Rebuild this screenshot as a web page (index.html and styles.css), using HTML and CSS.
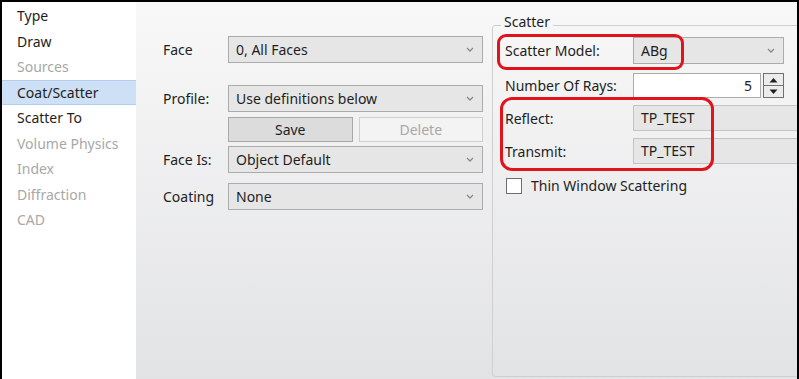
FILE: index.html
```html
<!DOCTYPE html>
<html lang="en">
<head>
    <meta charset="UTF-8">
    <title>Coat/Scatter</title>
    <link rel="stylesheet" href="styles.css">
</head>
<body>
    <div class="window">
        <ul class="nav">
            <li>Type</li>
            <li>Draw</li>
            <li class="disabled">Sources</li>
            <li class="active">Coat/Scatter</li>
            <li>Scatter To</li>
            <li class="disabled">Volume Physics</li>
            <li class="disabled">Index</li>
            <li class="disabled">Diffraction</li>
            <li class="disabled">CAD</li>
        </ul>

        <div class="content">
            <div class="face-form">
                <div class="row row-face">
                    <label>Face</label>
                    <div class="combo"><span>0, All Faces</span><svg class="chev" width="8" height="5" viewBox="0 0 8 5"><polyline points="1,1 4,4 7,1" /></svg></div>
                </div>
                <div class="row row-profile">
                    <label>Profile:</label>
                    <div class="combo"><span>Use definitions below</span><svg class="chev" width="8" height="5" viewBox="0 0 8 5"><polyline points="1,1 4,4 7,1" /></svg></div>
                </div>
                <div class="row row-buttons">
                    <label></label>
                    <div class="buttons">
                        <button class="btn">Save</button>
                        <button class="btn btn-disabled">Delete</button>
                    </div>
                </div>
                <div class="row row-faceis">
                    <label>Face Is:</label>
                    <div class="combo"><span>Object Default</span><svg class="chev" width="8" height="5" viewBox="0 0 8 5"><polyline points="1,1 4,4 7,1" /></svg></div>
                </div>
                <div class="row row-coating">
                    <label>Coating</label>
                    <div class="combo"><span>None</span><svg class="chev" width="8" height="5" viewBox="0 0 8 5"><polyline points="1,1 4,4 7,1" /></svg></div>
                </div>
            </div>

            <fieldset class="group">
                <legend>Scatter</legend>
                <div class="grow grow-model">
                    <label>Scatter Model:</label>
                    <div class="combo combo-short"><span>ABg</span><svg class="chev" width="8" height="5" viewBox="0 0 8 5"><polyline points="1,1 4,4 7,1" /></svg></div>
                </div>
                <div class="grow grow-rays">
                    <label>Number Of Rays:</label>
                    <div class="spin">
                        <div class="spin-input">5</div>
                        <div class="spin-buttons">
                            <div class="spin-btn"><svg width="9" height="6" viewBox="0 0 9 6"><polygon points="0.5,5.5 4.5,1 8.5,5.5" /></svg></div>
                            <div class="spin-btn"><svg width="9" height="6" viewBox="0 0 9 6"><polygon points="0.5,0.5 4.5,5 8.5,0.5" /></svg></div>
                        </div>
                    </div>
                </div>
                <div class="grow grow-reflect">
                    <label>Reflect:</label>
                    <div class="field">TP_TEST</div>
                </div>
                <div class="grow grow-transmit">
                    <label>Transmit:</label>
                    <div class="field">TP_TEST</div>
                </div>
                <div class="check-row">
                    <span class="check"></span>
                    <span>Thin Window Scattering</span>
                </div>
            </fieldset>
        </div>

        <!-- red callouts drawn over the screenshot -->
        <div class="callout callout-model"></div>
        <div class="callout callout-coat"></div>
    </div>
</body>
</html>
```

FILE: styles.css
```css
body {
    margin: 0;
    padding: 0;
    font-family: "Noto Sans", "Open Sans", sans-serif;
    font-size: 14px;
    color: #1e1e1e;
    background: #fff;
}

.window {
    position: relative;
    width: 799px;
    height: 379px;
    box-sizing: border-box;
    border: 2px solid #000;
    border-bottom: none;
    display: flex;
    overflow: hidden;
}

.nav {
    list-style: none;
    margin: 0;
    padding: 1px 0 0 0;
    width: 134px;
    flex-shrink: 0;
    background: #fff;
}

    .nav li {
        height: 25.5px;
        line-height: 25.5px;
        padding-left: 15px;
        box-sizing: border-box;
        white-space: nowrap;
    }

    .nav .disabled {
        color: #a8a8a8;
    }

    .nav .active {
        background: #cde0f6;
        border-top: 1px solid #b2cdef;
        border-bottom: 1px solid #b2cdef;
        line-height: 23.5px;
    }

.content {
    flex: 1;
    display: flex;
    align-items: flex-start;
    background: linear-gradient(#f8f8f8, #e2e3e5);
    padding: 0 0 0 27px;
}

.face-form {
    width: 320px;
    padding-top: 34px;
}

.row {
    display: flex;
    align-items: center;
}

    .row label {
        width: 65px;
        flex-shrink: 0;
    }

.row-profile { margin-top: 22px; }
.row-buttons { margin-top: 5px; }
.row-faceis { margin-top: 4px; }
.row-coating { margin-top: 10px; }

.combo {
    display: flex;
    align-items: center;
    justify-content: space-between;
    width: 255px;
    height: 27px;
    box-sizing: border-box;
    padding: 0 8px 0 7px;
    background: #e6e6e6;
    border: 1px solid #acacac;
}

.chev polyline {
    fill: none;
    stroke: #8a8a8a;
    stroke-width: 1.3;
}

.buttons {
    display: flex;
    gap: 6px;
    width: 255px;
}

.btn {
    flex: 1;
    height: 25px;
    font-family: inherit;
    font-size: 14px;
    color: #1e1e1e;
    background: #dcdcdc;
    border: 1px solid #a8a8a8;
    padding: 0;
}

.btn-disabled {
    background: #f3f3f3;
    border-color: #cfcfcf;
    color: #a8a8a8;
}

.group {
    margin: 13px 0 0 9px;
    padding: 0 0 0 12px;
    width: 340px;
    height: 362px;
    box-sizing: border-box;
    border: 1px solid #cfcfcf;
    border-radius: 3px;
}

    .group legend {
        padding: 0 3px 6px 3px;
        margin-left: -4px;
        line-height: 14px;
    }

.grow {
    display: flex;
    align-items: center;
}

    .grow label {
        width: 128px;
        flex-shrink: 0;
        white-space: nowrap;
    }

.grow-model { margin-top: 2px; }
.grow-rays { margin-top: 9px; }
.grow-reflect { margin-top: 7px; }
.grow-transmit { margin-top: 7px; }

.combo-short {
    width: 151px;
}

.spin {
    display: flex;
    width: 151px;
    height: 25px;
}

.spin-input {
    flex: 1;
    background: #fff;
    border: 1px solid #acacac;
    text-align: right;
    padding-right: 8px;
    line-height: 23px;
}

.spin-buttons {
    width: 19px;
    margin-left: 2px;
    display: flex;
    flex-direction: column;
    border: 1px solid #707070;
}

.spin-btn {
    flex: 1;
    display: flex;
    align-items: center;
    justify-content: center;
    background: #ececec;
}

    .spin-btn + .spin-btn {
        border-top: 1px solid #707070;
    }

    .spin-btn polygon {
        fill: #202020;
    }

.field {
    width: 200px;
    height: 26px;
    box-sizing: border-box;
    padding-left: 7px;
    line-height: 24px;
    background: #e6e6e6;
    border: 1px solid #c4c4c4;
}

.check-row {
    display: flex;
    align-items: center;
    gap: 9px;
    margin-top: 12px;
    padding-left: 1px;
}

.check {
    width: 16px;
    height: 16px;
    box-sizing: border-box;
    background: #fff;
    border: 1px solid #6e6e6e;
}

.callout {
    position: absolute;
    border: 3px solid #e1141c;
    box-sizing: border-box;
}

.callout-model {
    left: 495px;
    top: 32px;
    width: 187px;
    height: 36px;
    border-radius: 9px;
}

.callout-coat {
    left: 498px;
    top: 95px;
    width: 214px;
    height: 74px;
    border-radius: 12px;
}
```
